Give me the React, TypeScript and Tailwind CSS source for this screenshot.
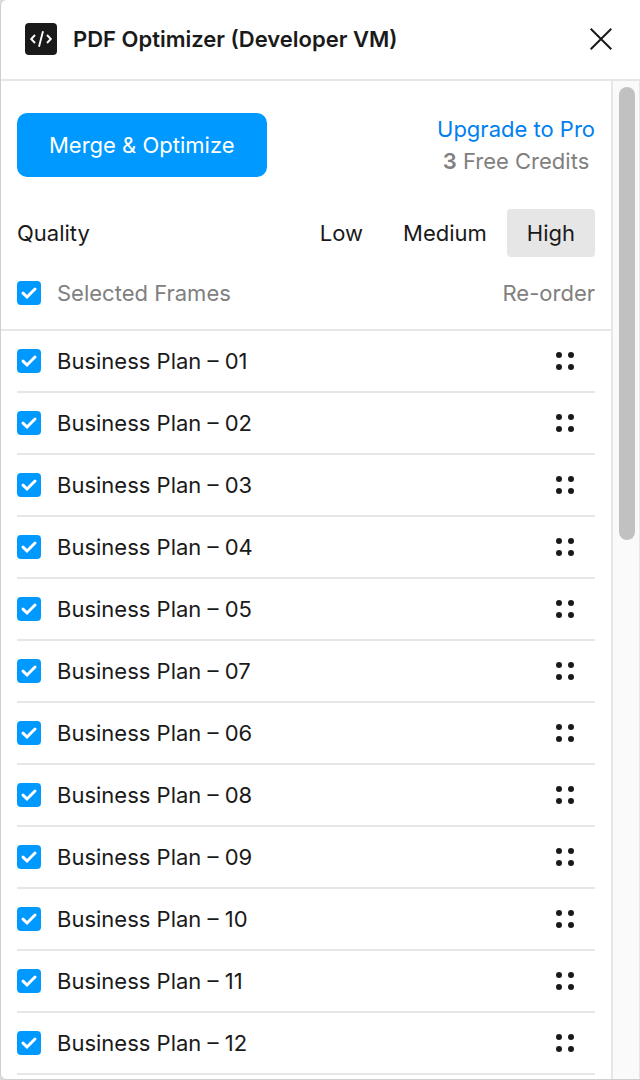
import { useState } from 'react';

const QUALITIES = ['Low', 'Medium', 'High'];

const FRAMES = ['01', '02', '03', '04', '05', '07', '06', '08', '09', '10', '11', '12'].map(
  (n) => `Business Plan – ${n}`
);

function Checkbox({ id, checked, onChange }: { id: string; checked: boolean; onChange: () => void }) {
  return (
    <span className="relative block h-6 w-6 shrink-0">
      <input
        id={id}
        type="checkbox"
        checked={checked}
        onChange={onChange}
        className="peer block h-6 w-6 appearance-none rounded border-2 border-[#b3b3b3] bg-white checked:border-[#0099ff] checked:bg-[#0099ff]"
      />
      <svg
        viewBox="0 0 24 24"
        fill="none"
        stroke="white"
        strokeWidth="3"
        strokeLinecap="round"
        className="pointer-events-none absolute inset-0 hidden h-6 w-6 peer-checked:block"
      >
        <path d="M6 12.2 10 16 18 8" />
      </svg>
    </span>
  );
}

function DragDots() {
  return (
    <svg viewBox="0 0 20 20" className="h-5 w-5" fill="#1a1a1a">
      <circle cx="4" cy="4" r="3" />
      <circle cx="16" cy="4" r="3" />
      <circle cx="4" cy="16" r="3" />
      <circle cx="16" cy="16" r="3" />
    </svg>
  );
}

export default function App() {
  const [quality, setQuality] = useState('High');
  const [selected, setSelected] = useState<string[]>(FRAMES);

  const allSelected = selected.length === FRAMES.length;

  const toggle = (frame: string) => {
    setSelected((prev) => (prev.includes(frame) ? prev.filter((f) => f !== frame) : [...prev, frame]));
  };

  return (
    <div className="min-h-screen bg-[#dcdcdc] font-['Inter',sans-serif] text-[22px] leading-8 text-[#1a1a1a]">
      <div className="flex min-h-screen flex-col overflow-hidden rounded-l-md border-b border-l border-[#cfcfcf] bg-white">
        <header className="flex h-[81px] items-center border-b-2 border-[#e6e6e6] pr-7 pb-0.5 pl-6">
          <svg viewBox="0 0 32 32" className="h-8 w-8" fill="none" stroke="white" strokeWidth="1.9">
            <rect width="32" height="32" rx="4" fill="#1a1a1a" stroke="none" />
            <path d="M10 12 6.2 16 10 20M22 12 25.8 16 22 20M18 8.2 14 23.8" />
          </svg>
          <h1 className="ml-4 flex-1 font-semibold">PDF Optimizer (Developer VM)</h1>
          <button type="button" aria-label="Close">
            <svg viewBox="0 0 22 22" className="h-[22px] w-[22px]" fill="none" stroke="#1a1a1a" strokeWidth="2">
              <path d="M.7.7 21.3 21.3M21.3.7.7 21.3" />
            </svg>
          </button>
        </header>

        <div className="flex flex-1">
          <main className="min-w-0 flex-1">
            <div className="px-4 pt-8">
              <div className="flex items-center justify-between">
                <button type="button" className="h-16 rounded-[10px] bg-[#0099ff] px-8 text-white">
                  Merge &amp; Optimize
                </button>
                <div className="text-center">
                  <a href="#upgrade" className="block text-[#0080f0]">
                    Upgrade to Pro
                  </a>
                  <p className="text-[#808080]">
                    <strong className="font-semibold">3</strong> Free Credits
                  </p>
                </div>
              </div>

              <div className="mt-8 flex items-center justify-between">
                <span>Quality</span>
                <div className="flex">
                  {QUALITIES.map((q) => (
                    <button
                      key={q}
                      type="button"
                      aria-pressed={q === quality}
                      onClick={() => setQuality(q)}
                      className={`h-12 rounded px-5 ${q === quality ? 'bg-[#e6e6e6]' : ''}`}
                    >
                      {q}
                    </button>
                  ))}
                </div>
              </div>
            </div>

            <div className="flex h-[74px] items-center border-b-2 border-[#e6e6e6] px-4 text-[#808080]">
              <Checkbox id="all" checked={allSelected} onChange={() => setSelected(allSelected ? [] : FRAMES)} />
              <label htmlFor="all" className="flex-1 pl-4">
                Selected Frames
              </label>
              <span>Re-order</span>
            </div>

            <ul className="px-4">
              {FRAMES.map((frame) => (
                <li key={frame} className="flex h-[62px] items-center border-b-2 border-[#e6e6e6] pr-5">
                  <Checkbox id={frame} checked={selected.includes(frame)} onChange={() => toggle(frame)} />
                  <label htmlFor={frame} className="flex-1 pl-4">
                    {frame}
                  </label>
                  <button type="button" aria-label={`Move ${frame}`} className="cursor-grab">
                    <DragDots />
                  </button>
                </li>
              ))}
            </ul>
          </main>

          {/* scrollbar track */}
          <div className="w-[29px] border-r border-l-2 border-[#e6e6e6] bg-[#fafafa] pt-1.5 pl-1.5">
            <div className="h-[453px] w-4 rounded-full bg-[#c1c1c1]"></div>
          </div>
        </div>
      </div>
    </div>
  );
}
